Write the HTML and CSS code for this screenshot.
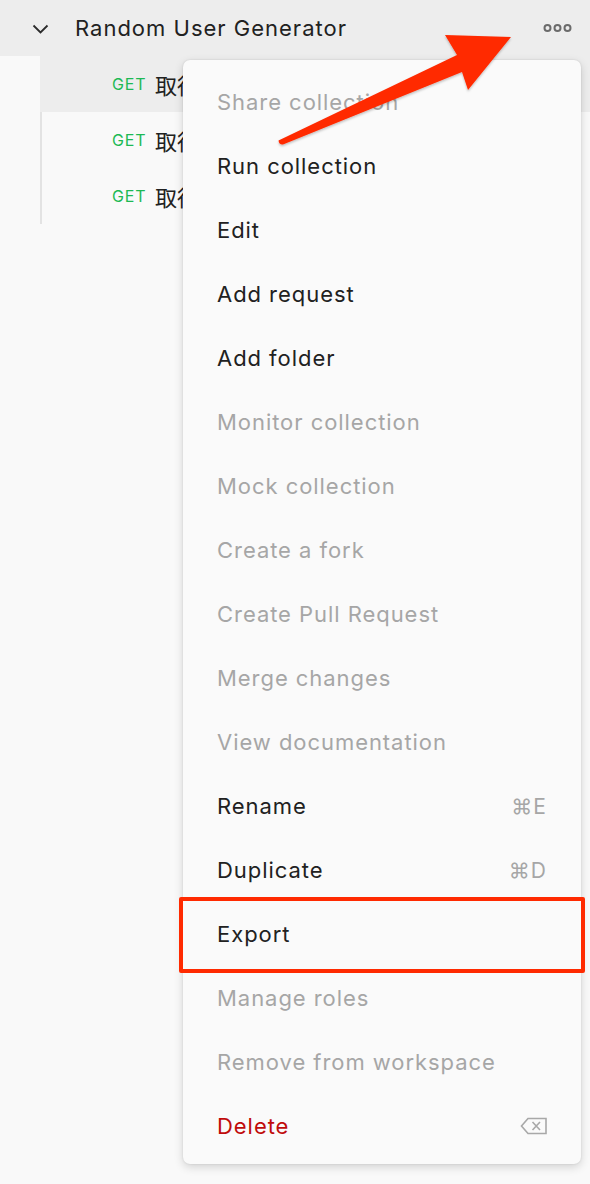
FILE: index.html
```html
<!DOCTYPE html>
<html>
<head>
<meta charset="utf-8">
<link rel="stylesheet" href="styles.css">
</head>
<body>
<div class="sidebar">
  <div class="row header">
    <svg class="chev" width="18" height="12" viewBox="0 0 18 12"><path d="M1.5 2.5 L8.5 9.5 L15.5 2.5" fill="none" stroke="#2b2b2b" stroke-width="1.8"/></svg>
    <span class="title">Random User Generator</span>
    <svg class="more" width="30" height="10" viewBox="0 0 30 10"><circle cx="4.5" cy="5" r="3" fill="none" stroke="#6b6b6b" stroke-width="2"/><circle cx="14.5" cy="5" r="3" fill="none" stroke="#6b6b6b" stroke-width="2"/><circle cx="24.5" cy="5" r="3" fill="none" stroke="#6b6b6b" stroke-width="2"/></svg>
  </div>
  <div class="children">
    <div class="row req hover"><span class="get">GET</span><span class="name">取得</span></div>
    <div class="row req"><span class="get">GET</span><span class="name">取得</span></div>
    <div class="row req"><span class="get">GET</span><span class="name">取得</span></div>
  </div>
</div>

<div class="menu">
  <div class="item dis">Share collection</div>
  <div class="item">Run collection</div>
  <div class="item">Edit</div>
  <div class="item">Add request</div>
  <div class="item">Add folder</div>
  <div class="item dis">Monitor collection</div>
  <div class="item dis">Mock collection</div>
  <div class="item dis">Create a fork</div>
  <div class="item dis">Create Pull Request</div>
  <div class="item dis">Merge changes</div>
  <div class="item dis">View documentation</div>
  <div class="item"><span>Rename</span><span class="key">⌘E</span></div>
  <div class="item"><span>Duplicate</span><span class="key">⌘D</span></div>
  <div class="item">Export</div>
  <div class="item dis">Manage roles</div>
  <div class="item dis">Remove from workspace</div>
  <div class="item del"><span>Delete</span>
    <svg class="bksp" width="28" height="18" viewBox="0 0 28 18"><path d="M8 1.5 H26 V16.5 H8 L1.5 9 Z" fill="none" stroke="#a8a8a8" stroke-width="1.6"/><path d="M12.5 5 L20 13 M20 5 L12.5 13" stroke="#a8a8a8" stroke-width="1.6"/></svg>
  </div>
</div>

<div class="highlight"></div>

<svg class="arrow" width="590" height="200" viewBox="0 0 590 200">
  <defs>
    <filter id="sh" x="-10%" y="-10%" width="120%" height="130%"><feDropShadow dx="0" dy="1.5" stdDeviation="1.2" flood-color="#000" flood-opacity="0.25"/></filter>
  </defs>
  <path filter="url(#sh)" fill="#ff2a00" d="M278.5 140.5 Q279 145 283 144.5 L462 72 L468 90 L511 37 L445 35 L457 55 Z"/>
</svg>
</body>
</html>
```
FILE: styles.css
```css
html, body {
  margin: 0;
  padding: 0;
}
body {
  width: 590px;
  height: 1184px;
  background: #f9f9f9;
  font-family: Inter, "Noto Sans", "Noto Sans CJK TC", sans-serif;
  color: #212121;
  position: relative;
  overflow: hidden;
}
.sidebar {
  display: flex;
  flex-direction: column;
}
.row {
  height: 56px;
  display: flex;
  align-items: center;
}
.header {
  background: #ededed;
  padding-left: 32px;
  padding-right: 17px;
}
.chev {
  display: block;
  margin-top: 1px;
}
.title {
  font-size: 22px;
  margin-left: 25px;
  flex: 1;
  color: #212121;
  letter-spacing: 1px;
}
.more {
  display: block;
}
.children {
  margin-left: 40px;
  border-left: 2px solid #e3e3e3;
  width: 550px;
}
.req {
  padding-left: 70px;
}
.hover {
  background: #ededed;
  margin-left: -2px;
  padding-left: 72px;
}
.get {
  color: #1db954;
  font-size: 16px;
  letter-spacing: 0.8px;
  width: 43px;
}
.name {
  font-family: "Noto Sans CJK TC", "Noto Sans CJK SC", sans-serif;
  font-size: 22px;
  color: #212121;
}
.menu {
  position: absolute;
  left: 183px;
  top: 60px;
  width: 398px;
  box-sizing: border-box;
  padding: 10px 0 6px;
  background: #fafafa;
  border-radius: 7px;
  box-shadow: 0 3px 10px rgba(0,0,0,0.16), 0 0 2px rgba(0,0,0,0.12);
}
.item {
  height: 64px;
  display: flex;
  align-items: center;
  justify-content: space-between;
  padding: 0 34px;
  font-size: 22px;
  letter-spacing: 0.95px;
  color: #212121;
}
.item.dis {
  color: #a6a6a6;
}
.item.del {
  color: #c00b0b;
}
.key {
  color: #a6a6a6;
  font-size: 21px;
  letter-spacing: 1px;
  font-family: Inter, "DejaVu Sans", sans-serif;
}
.bksp {
  display: block;
  margin-right: -1px;
}
.highlight {
  position: absolute;
  left: 179px;
  top: 897px;
  width: 406px;
  height: 76px;
  box-sizing: border-box;
  border: 4px solid #ff2a00;
  border-radius: 2px;
}
.arrow {
  position: absolute;
  left: 0;
  top: 0;
}
```
